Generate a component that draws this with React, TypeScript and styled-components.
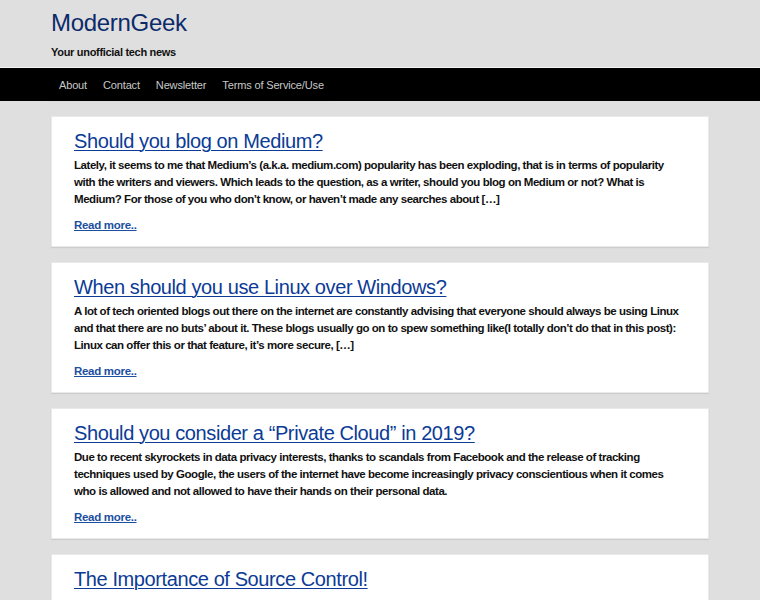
import React from "react";
import styled, { createGlobalStyle } from "styled-components";

const GlobalStyle = createGlobalStyle`
  html, body {
    margin: 0;
    padding: 0;
    background: #dfdfdf;
    font-family: "Liberation Sans", Arial, Helvetica, sans-serif;
  }
  * { box-sizing: border-box; }
`;

const Page = styled.div`
  width: 100%;
  min-height: 600px;
  background: #dfdfdf;
`;

const Container = styled.div`
  width: 658px;
  margin: 0 auto;
`;

const Header = styled.header`
  padding-top: 9px;
  padding-bottom: 9px;
`;

const SiteTitle = styled.h1`
  margin: 0;
  font-size: 24px;
  line-height: 28px;
  font-weight: normal;
  color: #0c2b6b;
  letter-spacing: -0.3px;
`;

const Tagline = styled.p`
  margin: 9px 0 0;
  font-size: 11px;
  line-height: 12px;
  font-weight: bold;
  color: #111;
  letter-spacing: -0.3px;
`;

const NavBar = styled.nav`
  border-top: 1px solid #f4f4f4;
  background: #000;
  height: 34px;
`;

const Menu = styled.ul`
  list-style: none;
  margin: 0;
  padding: 0;
  display: inline-flex;
  height: 34px;
  border-bottom: 1px dotted #d8d8d8;
`;

const MenuItem = styled.li`
  display: flex;
  align-items: center;
  padding: 0 8px;
  font-size: 11px;
  color: #c8c8c8;
  letter-spacing: -0.15px;
`;

const Posts = styled.main`
  display: flex;
  flex-direction: column;
  gap: 15px;
  padding-top: 15px;
`;

const Card = styled.article`
  background: #fff;
  border: 1px solid #e9e9e9;
  box-shadow: 0 1px 1px rgba(0, 0, 0, 0.08);
  padding: 12px 22px 12px;
  min-height: 131px;
`;

const PostTitle = styled.h2`
  margin: 0;
  font-size: 20px;
  line-height: 24px;
  font-weight: normal;
  letter-spacing: -0.4px;

  a {
    color: #0b3b96;
    text-decoration: underline;
    text-decoration-thickness: 1px;
    text-underline-offset: 2px;
  }
`;

const Excerpt = styled.p`
  margin: 4px 0 0;
  font-size: 11.5px;
  line-height: 17px;
  font-weight: bold;
  color: #111;
  letter-spacing: -0.45px;
`;

const ReadMore = styled.a`
  display: inline-block;
  margin-top: 9px;
  font-size: 11.5px;
  line-height: 17px;
  font-weight: bold;
  color: #1b4fa0;
  text-decoration: underline;
  letter-spacing: -0.3px;
`;

type Post = { title: string; excerpt?: string };

const posts: Post[] = [
  {
    title: "Should you blog on Medium?",
    excerpt:
      "Lately, it seems to me that Medium’s (a.k.a. medium.com) popularity has been exploding, that is in terms of popularity with the writers and viewers. Which leads to the question, as a writer, should you blog on Medium or not? What is Medium? For those of you who don’t know, or haven’t made any searches about […]",
  },
  {
    title: "When should you use Linux over Windows?",
    excerpt:
      "A lot of tech oriented blogs out there on the internet are constantly advising that everyone should always be using Linux and that there are no buts’ about it. These blogs usually go on to spew something like(I totally don’t do that in this post): Linux can offer this or that feature, it’s more secure, […]",
  },
  {
    title: "Should you consider a “Private Cloud” in 2019?",
    excerpt:
      "Due to recent skyrockets in data privacy interests, thanks to scandals from Facebook and the release of tracking techniques used by Google, the users of the internet have become increasingly privacy conscientious when it comes who is allowed and not allowed to have their hands on their personal data.",
  },
  {
    title: "The Importance of Source Control!",
  },
];

const navItems = ["About", "Contact", "Newsletter", "Terms of Service/Use"];

export default function App() {
  return (
    <Page>
      <GlobalStyle />
      <Container>
        <Header>
          <SiteTitle>ModernGeek</SiteTitle>
          <Tagline>Your unofficial tech news</Tagline>
        </Header>
      </Container>
      <NavBar>
        <Container>
          <Menu>
            {navItems.map((n) => (
              <MenuItem key={n}>{n}</MenuItem>
            ))}
          </Menu>
        </Container>
      </NavBar>
      <Container>
        <Posts>
          {posts.map((p) => (
            <Card key={p.title}>
              <PostTitle>
                <a href="#">{p.title}</a>
              </PostTitle>
              {p.excerpt && (
                <>
                  <Excerpt>{p.excerpt}</Excerpt>
                  <ReadMore href="#">Read more..</ReadMore>
                </>
              )}
            </Card>
          ))}
        </Posts>
      </Container>
    </Page>
  );
}
